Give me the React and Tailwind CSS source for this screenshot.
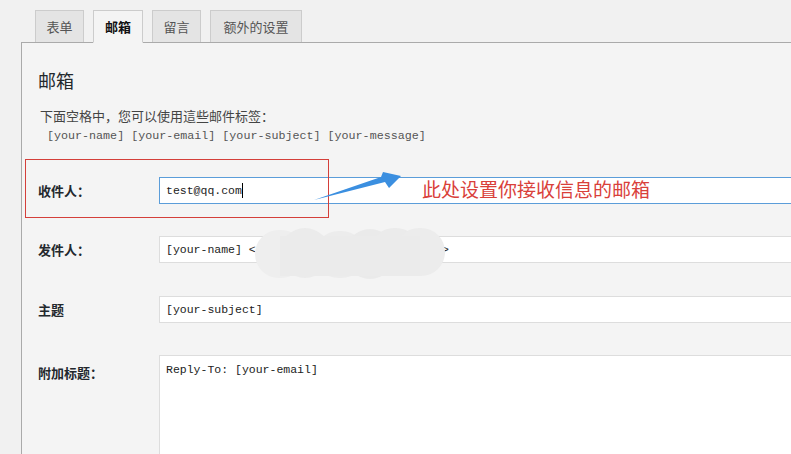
import React from "react";

const cjk = { fontFamily: '"Noto Sans CJK SC", "Noto Sans", sans-serif' };
const mono = { fontFamily: '"Liberation Mono", "Noto Sans CJK SC", monospace' };

function Tab({ label, active, w }) {
  return (
    <div
      className={
        "h-[32px] flex items-center justify-center border border-[#cccccc] text-[13px] " +
        w +
        (active
          ? " bg-[#f4f4f4] border-b-[#f4f4f4] font-bold text-[#111] h-[33px] relative z-10"
          : " bg-[#e4e4e4] border-b-0 text-[#555]")
      }
    >
      {label}
    </div>
  );
}

function Row({ label, children, top }) {
  return (
    <div className={"flex items-center " + top}>
      <div className="w-[121px] shrink-0 text-[13px] font-bold text-[#23282d]">{label}</div>
      {children}
    </div>
  );
}

export default function App() {
  return (
    <div className="relative w-[791px] h-[454px] overflow-hidden bg-[#f1f1f1]" style={cjk}>
      <div className="flex items-start gap-[9px] pl-[35px] pt-[10px]">
        <Tab label="表单" w="w-[49px]" />
        <Tab label="邮箱" w="w-[50px]" active />
        <Tab label="留言" w="w-[49px]" />
        <Tab label="额外的设置" w="w-[92px]" />
      </div>
      <div className="ml-[21px] -mt-px border-l border-t border-[#aaaaaa] bg-[#f4f4f4] pl-[16px] h-[420px]">
        <div className="pt-[24px] h-[50px] text-[18px] leading-[26px] text-[#23282d]">邮箱</div>
        <div className="mt-[15px] pl-[2px] text-[13px] leading-[16px] text-[#444]">
          下面空格中，您可以使用這些邮件标签：
        </div>
        <div className="mt-[4px] pl-[9px] text-[11.7px] leading-[16px] text-[#555] whitespace-pre" style={mono}>
          [your-name] [your-email] [your-subject] [your-message]
        </div>
        <Row label="收件人：" top="mt-[33px]">
          <div
            className="w-[700px] shrink-0 h-[27px] bg-white border border-[#5b9dd9] pl-[6px] flex items-center text-[11.5px] text-[#222]"
            style={mono}
          >
            test@qq.com<span className="w-px h-[15px] bg-black"></span>
          </div>
        </Row>
        <Row label="发件人：" top="mt-[32px]">
          <div
            className="w-[700px] shrink-0 h-[27px] bg-white border border-[#dddddd] pl-[6px] flex items-center text-[11.5px] text-[#222] whitespace-pre"
            style={mono}
          >
            {"[your-name] <                          u>"}
          </div>
        </Row>
        <Row label="主题" top="mt-[33px]">
          <div
            className="w-[700px] shrink-0 h-[27px] bg-white border border-[#dddddd] pl-[6px] flex items-center text-[11.5px] text-[#222]"
            style={mono}
          >
            [your-subject]
          </div>
        </Row>
        <div className="flex items-start mt-[32px]">
          <div className="w-[121px] shrink-0 pt-[8px] text-[13px] font-bold text-[#23282d]">附加标题：</div>
          <div
            className="w-[700px] shrink-0 h-[140px] bg-white border border-[#dddddd] pl-[6px] pt-[6px] text-[11.5px] leading-[16px] text-[#222]"
            style={mono}
          >
            Reply-To: [your-email]
          </div>
        </div>
      </div>

      {/* redaction blobs */}
      <div className="absolute left-[255px] top-[228px] w-[190px] h-[50px]">
        <div className="absolute left-0 top-[2px] w-[50px] h-[48px] rounded-full bg-[#eeeeee]"></div>
        <div className="absolute left-[25px] top-0 w-[50px] h-[50px] rounded-full bg-[#ebebeb]"></div>
        <div className="absolute left-[60px] top-[3px] w-[50px] h-[47px] rounded-full bg-[#ececec]"></div>
        <div className="absolute left-[90px] top-[1px] w-[50px] h-[50px] rounded-full bg-[#eaeaea]"></div>
        <div className="absolute left-[115px] top-0 w-[50px] h-[48px] rounded-full bg-[#ebebeb]"></div>
        <div className="absolute left-[140px] top-0 w-[50px] h-[48px] rounded-full bg-[#ececec]"></div>
        <div className="absolute left-[25px] top-[8px] w-[140px] h-[40px] bg-[#ebebeb]"></div>
      </div>

      {/* annotation */}
      <div className="absolute left-[25px] top-[159px] w-[304px] h-[59px] border border-[#d43f3a]"></div>
      <svg className="absolute left-0 top-0" width="791" height="454" viewBox="0 0 791 454">
        <polygon points="314,200 385,182 389,188 401,176 383,172 381,177" fill="#3b8fe0" />
      </svg>
      <div className="absolute left-[422px] top-[176px] text-[19px] leading-[26px] text-[#d9403a] whitespace-nowrap">
        此处设置你接收信息的邮箱
      </div>
    </div>
  );
}
